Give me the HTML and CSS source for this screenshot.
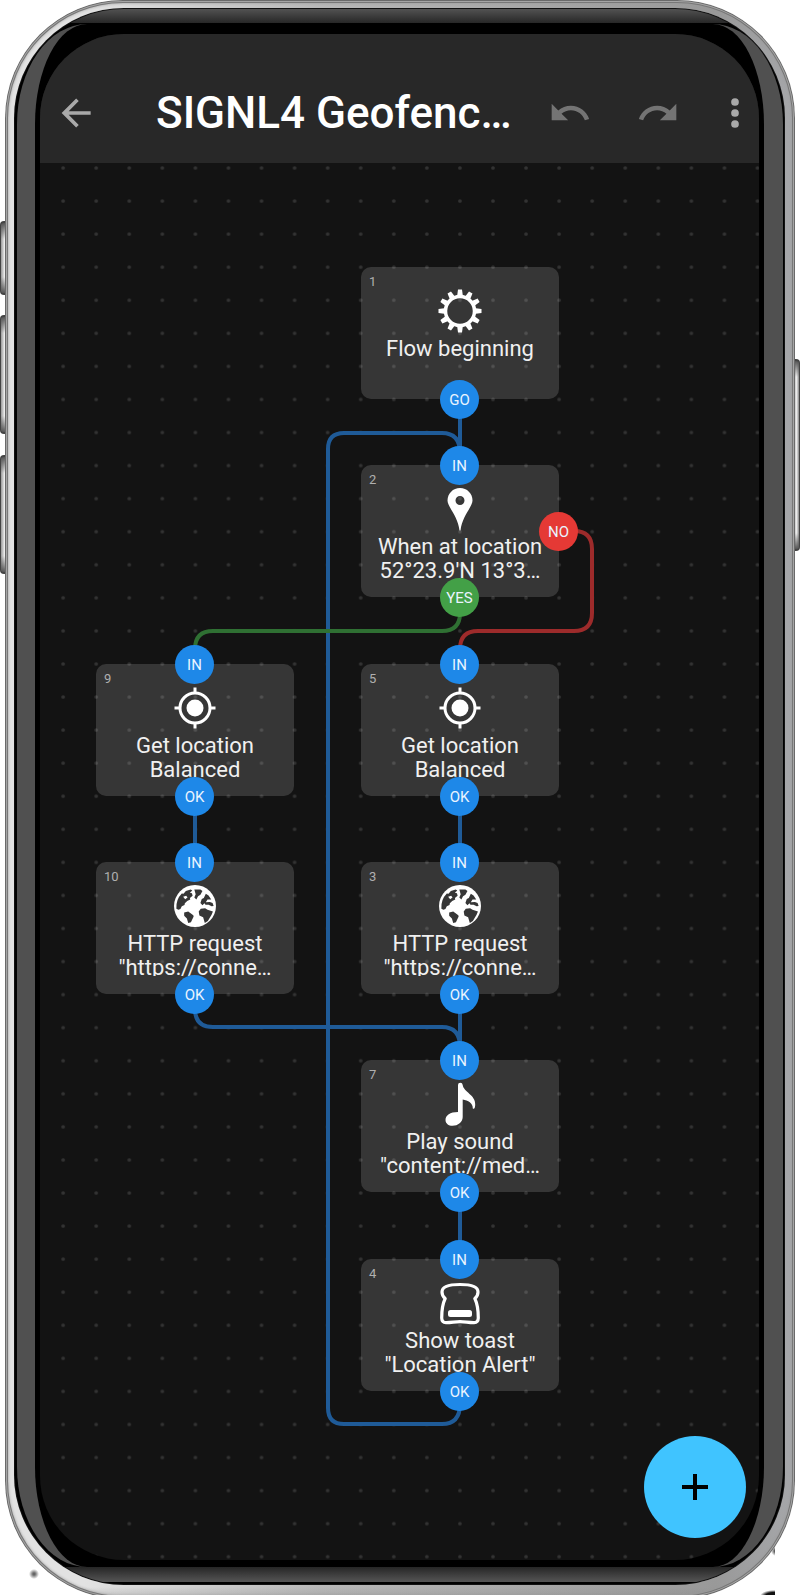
FILE: index.html
```
<!DOCTYPE html>
<html lang="en">
<head>
<meta charset="utf-8">
<meta name="viewport" content="width=device-width, initial-scale=1">
<title>SIGNL4 Geofencing flow</title>
<link rel="stylesheet" href="styles.css">
</head>
<body>
<svg class="symbols" aria-hidden="true">
  <symbol id="target" viewBox="0 0 44 44">
    <circle cx="22" cy="22" r="15" fill="none" stroke="currentColor" stroke-width="3"/>
    <circle cx="22" cy="22" r="8.500" fill="currentColor"/>
    <path d="M22 1.500v6M22 36.500v6M1.500 22h6M36.500 22h6" stroke="currentColor" stroke-width="3"/>
  </symbol>
  <symbol id="globe" viewBox="10 10 130 130">
    <circle cx="75" cy="75" r="62" fill="currentColor"/>
    <g fill="#363636">
      <path d="M20 83 Q18 56 36 38 L41 39 L48 31 L62 26 L67 29 L60 36 L66 37 L68 45 L60 51 L61 56 L52 60 L45 67 L44 72 L36 76 L32 84 L26 86Z"/>
      <path d="M43 94 L55 91 L70 102 L71 106 L63 123 L55 125 L51 112 L43 104Z"/>
      <path d="M73 26 L91 26 L97 31 L91 42 L84 46 L79 56 L73 50 L77 40Z"/>
      <path d="M91 66 L95 54 L101 51 L107 39 L115 44 L123 56 L112 56 L107 64 L119 63 L127 66 L130 75 L124 76 L115 71 L106 71 L103 67 L97 73Z"/>
      <path d="M86 91 L92 83 L105 82 L112 86 L128 91 L124 101 L113 119 L104 125 L99 108 L88 103Z"/>
    </g>
    <path d="M40 48l9-3 4 5-7 5zM109 78l16 2-12 4z" fill="currentColor"/>
  </symbol>
</svg>
<div class="device">
  <span class="key key-mute"></span>
  <span class="key key-up"></span>
  <span class="key key-down"></span>
  <span class="key key-power"></span>
  <div class="phone">
    <div class="bezel">
      <main class="screen">
        <header class="bar">
          <button class="icon-btn back" aria-label="Back">
            <svg viewBox="0 0 24 24"><path d="M20 11v2H8l5.500 5.500-1.420 1.420L4.160 12l7.920-7.920L13.500 5.500 8 11h12z"/></svg>
          </button>
          <h1 class="title">SIGNL4 Geofenc…</h1>
          <button class="icon-btn dim" aria-label="Undo">
            <svg viewBox="0 0 24 24"><path d="M12.500 8c-2.650 0-5.050.99-6.900 2.600L2 7v9h9l-3.620-3.620c1.390-1.160 3.160-1.880 5.120-1.880 3.540 0 6.550 2.310 7.600 5.500l2.370-.78C21.080 11.030 17.150 8 12.500 8z"/></svg>
          </button>
          <button class="icon-btn dim redo" aria-label="Redo">
            <svg viewBox="0 0 24 24"><path d="M18.400 10.600C16.550 8.990 14.150 8 11.500 8c-4.650 0-8.580 3.030-9.960 7.220L3.900 16c1.050-3.190 4.050-5.500 7.600-5.500 1.950 0 3.730.72 5.120 1.880L13 16h9V7l-3.600 3.600z"/></svg>
          </button>
          <button class="icon-btn more" aria-label="More options">
            <svg viewBox="0 0 24 24"><circle cx="12" cy="6" r="2.100"/><circle cx="12" cy="12" r="2.100"/><circle cx="12" cy="18" r="2.100"/></svg>
          </button>
        </header>
        <section class="canvas" aria-label="Flow diagram">
          <svg class="grid" viewBox="0 0 435 845" preserveAspectRatio="xMinYMin slice" aria-hidden="true">
            <defs><pattern id="dots" x="4" y="-7" width="20" height="20" patternUnits="userSpaceOnUse"><circle cx="10" cy="10" r="1.100" fill="#333"/></pattern></defs>
            <rect width="435" height="845" fill="url(#dots)"/>
          </svg>
          <svg class="wires" aria-hidden="true">
            <g class="blue">
              <path d="M420 236V302M420 633V699M420 831V897M420 1030V1096M155 633V699"/>
              <path d="M420 1228V1241Q420 1261 402 1261H304Q288 1261 288 1245V286Q288 270 304 270H402Q420 270 420 290V302"/>
              <path d="M155 831V846Q155 864 173 864H402Q420 864 420 884V897"/>
            </g>
            <path class="green" d="M420 434V450Q420 468 402 468H173Q155 468 155 486V501"/>
            <path class="red" d="M519 368H534Q552 368 552 386V450Q552 468 534 468H438Q420 468 420 486V501"/>
          </svg>

          <article class="node n1">
            <span class="num">1</span>
            <svg class="icon" viewBox="0 0 44 44">
              <circle cx="22" cy="22" r="14.500" fill="none" stroke="currentColor" stroke-width="3.500"/>
              <g fill="currentColor">
                <path id="tooth" d="M19 8l1-7.500h4l1 7.500zM19 36l1 7.500h4l1-7.500z"/>
                <use href="#tooth" transform="rotate(30 22 22)"/><use href="#tooth" transform="rotate(60 22 22)"/><use href="#tooth" transform="rotate(90 22 22)"/><use href="#tooth" transform="rotate(120 22 22)"/><use href="#tooth" transform="rotate(150 22 22)"/>
              </g>
            </svg>
            <p class="text">Flow beginning</p>
            <span class="port out">GO</span>
          </article>

          <article class="node n2">
            <span class="num">2</span>
            <svg class="icon" viewBox="0 0 44 44"><path fill="currentColor" fill-rule="evenodd" d="M22 1C15 1 9.500 6.500 9.500 13.500C9.500 20 20 29 21.500 43.500H22.500C24 29 34.500 20 34.500 13.500C34.500 6.500 29 1 22 1ZM22 9a4.500 4.500 0 1 1 0 9a4.500 4.500 0 1 1 0-9Z"/></svg>
            <p class="text">When at location<br>52°23.9'N 13°3…</p>
            <span class="port in">IN</span>
            <span class="port out yes">YES</span>
            <span class="port side no">NO</span>
          </article>

          <article class="node n9">
            <span class="num">9</span>
            <svg class="icon"><use href="#target"/></svg>
            <p class="text">Get location<br>Balanced</p>
            <span class="port in">IN</span>
            <span class="port out">OK</span>
          </article>

          <article class="node n5">
            <span class="num">5</span>
            <svg class="icon"><use href="#target"/></svg>
            <p class="text">Get location<br>Balanced</p>
            <span class="port in">IN</span>
            <span class="port out">OK</span>
          </article>

          <article class="node n10">
            <span class="num">10</span>
            <svg class="icon"><use href="#globe"/></svg>
            <p class="text">HTTP request<br>"https://conne…</p>
            <span class="port in">IN</span>
            <span class="port out">OK</span>
          </article>

          <article class="node n3">
            <span class="num">3</span>
            <svg class="icon"><use href="#globe"/></svg>
            <p class="text">HTTP request<br>"https://conne…</p>
            <span class="port in">IN</span>
            <span class="port out">OK</span>
          </article>

          <article class="node n7">
            <span class="num">7</span>
            <svg class="icon" viewBox="0 0 44 44"><path fill="currentColor" d="M20 3Q20 .8 22.300 .8Q24.500 .8 24.700 3C25.500 10 38 13 37.200 23Q36.800 28 34.800 26.500C35 21 30 18.500 24.700 17.500V35C24.700 40 20 43.800 14.500 43.800C10.500 43.800 7.500 41.500 7.500 38C7.500 33.500 12 30 20 30Z"/></svg>
            <p class="text">Play sound<br>"content://med…</p>
            <span class="port in">IN</span>
            <span class="port out">OK</span>
          </article>

          <article class="node n4">
            <span class="num">4</span>
            <svg class="icon" viewBox="0 0 44 44">
              <path fill="none" stroke="currentColor" stroke-width="3.200" stroke-linejoin="round" d="M22 3.500C31 3.500 40 4.500 40 11C40 14 39.500 15.500 36.800 17.500C39.500 23 40.300 31 40.300 37Q40.200 41.500 36 41.700C31 41.800 27 40.700 22 40.700S13 41.800 8 41.700Q3.800 41.500 3.700 37C3.700 31 4.500 23 7.200 17.500C4.500 15.500 4 14 4 11C4 4.500 13 3.500 22 3.500Z"/>
              <rect x="10" y="29" width="24" height="7" rx="2.500" fill="currentColor"/>
            </svg>
            <p class="text">Show toast<br>"Location Alert"</p>
            <span class="port in">IN</span>
            <span class="port out">OK</span>
          </article>
        </section>
        <button class="fab" aria-label="Add block">
          <svg viewBox="0 0 26 26"><path d="M13 0V26M0 13H26"/></svg>
        </button>
      </main>
    </div>
  </div>
</div>
</body>
</html>
```
FILE: styles.css
```
* { box-sizing: border-box; }

body {
  margin: 0;
  background: #fff;
  font-family: Roboto, "Liberation Sans", sans-serif;
}

.symbols {
  position: absolute;
  width: 0;
  height: 0;
}

.device {
  position: relative;
  overflow: hidden;
  padding: 0 5px;
  background:
    radial-gradient(circle at 34px 1574px, #666 1px, transparent 5px),
    linear-gradient(#fff, #fff) right / 25px 100% no-repeat,
    radial-gradient(circle at 776px 1551px, #444 1px, transparent 5px),
    radial-gradient(ellipse 14px 6px at 774px 1596px, #111 60%, transparent),
    #fff;
}

.key {
  position: absolute;
  left: 0;
  width: 7px;
  border: solid #444;
  border-width: 2px 0 2px 1px;
  border-radius: 4px 0 0 4px;
  background: linear-gradient(#555, transparent 16px, transparent calc(100% - 16px), #555), linear-gradient(90deg, #999, #eee 60%, #888);
}
.key-mute { top: 221px; height: 74px; }
.key-up { top: 315px; height: 119px; }
.key-down { top: 455px; height: 119px; }
.key-power {
  top: 359px;
  left: auto;
  right: 0;
  height: 192px;
  border-width: 2px 1px 2px 0;
  border-radius: 0 4px 4px 0;
}

.phone {
  position: relative;
  margin-bottom: -4px;
  padding: 8px 10px 14px 9px;
  border-radius: 118px;
  background:
    linear-gradient(transparent 8px, transparent calc(100% - 12px), #8886 100%),
    linear-gradient(90deg, #e2e2e2 10%, #b8b8b8 40%, #999 90%, #a6a7aa);
  box-shadow:
    inset 0 0 0 1px #6a6a6a,
    inset 0 0 0 2px #a5a5a5,
    inset 0 0 0 3px #777,
    inset 0 0 3px 3px #999;
}

.bezel {
  position: relative;
  padding: 26px 26px 25px;
  border-radius: 110px;
  background:
    linear-gradient(#555, #272727) top / 100% 15px no-repeat,
    linear-gradient(#262626, #555) 0 calc(100% - 3px) / 100% 15px no-repeat,
    #000;
  box-shadow: inset 0 0 0 1px #111;
  overflow: hidden;
}

.bezel::before {
  content: "";
  position: absolute;
  inset: 16px 2px 18px 3px;
  border: solid #505050;
  border-width: 0 19px 0 18px;
  border-radius: 70px / 100px;
  background: #000;
}

.screen {
  position: relative;
  border-radius: 84px;
  overflow: hidden;
  background: #131313;
}

.bar {
  display: flex;
  align-items: center;
  padding: 56px 2px 27px 14px;
  background: #282828;
}

.title {
  flex: 1;
  margin: 0 0 0 58px;
  font-size: 44px;
  font-weight: 500;
  line-height: 46px;
  color: #fff;
  white-space: nowrap;
}

.icon-btn {
  flex: none;
  width: 44px;
  height: 44px;
  padding: 0;
  border: 0;
  background: none;
  color: #a9a9a9;
}
.icon-btn svg {
  display: block;
  width: 44px;
  height: 44px;
  fill: currentColor;
}
.dim { color: #747474; }
.redo { margin-left: 44px; }
.more { margin-left: 33px; }

.canvas {
  position: relative;
  min-height: 1397px;
}

.grid, .wires {
  position: absolute;
  inset: 0;
  width: 100%;
  height: 100%;
}

.wires path {
  fill: none;
  stroke-width: 4px;
}
.wires .blue path { stroke: #1f5b98; }
.wires .green { stroke: #2f7033; }
.wires .red { stroke: #9d2b2b; }

.node {
  position: absolute;
  display: flex;
  flex-direction: column;
  align-items: center;
  width: 198px;
  height: 132px;
  padding-top: 22px;
  border-radius: 10px;
  background: rgba(255, 255, 255, .15);
  color: #fff;
}
.n1 { left: 321px; top: 104px; }
.n2 { left: 321px; top: 302px; }
.n5 { left: 321px; top: 501px; }
.n3 { left: 321px; top: 699px; }
.n7 { left: 321px; top: 897px; }
.n4 { left: 321px; top: 1096px; }
.n9 { left: 56px; top: 501px; }
.n10 { left: 56px; top: 699px; }

.num {
  position: absolute;
  left: 8px;
  top: 7px;
  font-size: 13px;
  line-height: 16px;
  color: #b0b0b0;
}

.icon {
  width: 44px;
  height: 44px;
}

.text {
  height: 44px;
  margin: 4px 0 0;
  overflow: hidden;
  font-size: 22px;
  line-height: 24px;
  text-align: center;
  white-space: nowrap;
  color: #f0f0f0;
}

.port {
  position: absolute;
  left: 50%;
  width: 39px;
  height: 39px;
  margin: -19px 0 0 -20px;
  border-radius: 50%;
  background: #1e88e8;
  color: #eaf4ff;
  font-size: 15px;
  line-height: 40px;
  text-align: center;
}
.in { top: 0; }
.out { top: 100%; }
.side { top: 50%; left: 100%; }
.yes { background: #43a047; }
.no { background: #e53935; }

.fab {
  position: absolute;
  right: 13px;
  bottom: 22px;
  display: grid;
  place-items: center;
  width: 102px;
  height: 102px;
  padding: 0;
  border: 0;
  border-radius: 50%;
  background: #40c4ff;
}
.fab svg {
  width: 26px;
  height: 26px;
  stroke: #000;
  stroke-width: 4px;
}
```
